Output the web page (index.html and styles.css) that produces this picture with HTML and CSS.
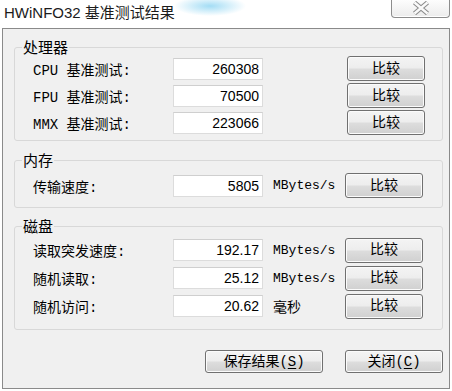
FILE: index.html
```html
<!DOCTYPE html>
<html lang="zh-CN">
<head>
<meta charset="utf-8">
<title>HWiNFO32 基准测试结果</title>
<link rel="stylesheet" href="styles.css">
</head>
<body>
<div class="window">
  <div class="titlebar">
    <span class="title">HWiNFO32 基准测试结果</span>
    <button class="close-btn" aria-label="关闭">
      <svg width="18" height="14" viewBox="0 0 18 14">
        <path d="M2.5 1.5 L15.5 12.5 M15.5 1.5 L2.5 12.5" stroke="#8c8c8c" stroke-width="4.6" fill="none"/>
        <path d="M2.5 1.5 L15.5 12.5 M15.5 1.5 L2.5 12.5" stroke="#fafafa" stroke-width="2.4" fill="none"/>
      </svg>
    </button>
  </div>
  <div class="dialog">
    <fieldset class="group g-cpu">
      <legend>处理器</legend>
      <div class="row"><span class="label">CPU 基准测试:</span><span class="field">260308</span><span class="unit"></span><button class="btn cmp">比较</button></div>
      <div class="row"><span class="label">FPU 基准测试:</span><span class="field">70500</span><span class="unit"></span><button class="btn cmp">比较</button></div>
      <div class="row"><span class="label">MMX 基准测试:</span><span class="field">223066</span><span class="unit"></span><button class="btn cmp">比较</button></div>
    </fieldset>
    <fieldset class="group g-mem">
      <legend>内存</legend>
      <div class="row"><span class="label">传输速度:</span><span class="field">5805</span><span class="unit">MBytes/s</span><button class="btn cmp">比较</button></div>
    </fieldset>
    <fieldset class="group g-disk">
      <legend>磁盘</legend>
      <div class="row tall"><span class="label">读取突发速度:</span><span class="field">192.17</span><span class="unit">MBytes/s</span><button class="btn cmp">比较</button></div>
      <div class="row tall"><span class="label">随机读取:</span><span class="field">25.12</span><span class="unit">MBytes/s</span><button class="btn cmp">比较</button></div>
      <div class="row tall"><span class="label">随机访问:</span><span class="field">20.62</span><span class="unit unit-cjk">毫秒</span><button class="btn cmp">比较</button></div>
    </fieldset>
    <div class="actions">
      <button class="btn action save">保存结果(<u>S</u>)</button>
      <button class="btn action close">关闭(<u>C</u>)</button>
    </div>
  </div>
</div>
</body>
</html>
```
FILE: styles.css
```css
* { box-sizing: border-box; }
html, body { margin: 0; padding: 0; }
body {
  width: 452px;
  height: 391px;
  overflow: hidden;
  background: #fff;
  font-family: "Liberation Sans", "Noto Sans CJK SC", sans-serif;
  color: #000;
}
.window {
  width: 452px;
  height: 391px;
  background:
    radial-gradient(ellipse 36px 10px at 210px 6px, rgba(140, 212, 242, 0.8), rgba(140, 212, 242, 0)),
    #fff;
}
.titlebar {
  height: 28px;
  display: flex;
  justify-content: space-between;
  align-items: flex-start;
}
.title {
  font-family: "Liberation Sans", "Noto Sans CJK SC", sans-serif;
  font-size: 15px;
  line-height: 20px;
  padding: 3px 0 0 4px;
  color: #1b1b1b;
  white-space: nowrap;
}
.close-btn {
  width: 59px;
  height: 18px;
  margin-right: 2px;
  padding: 0 0 2px;
  border: 1px solid #8d8d8d;
  border-top: none;
  border-radius: 0 0 4px 4px;
  background: linear-gradient(#fdfdfd, #ececec);
  box-shadow: inset 0 -1px 0 #fff;
  display: flex;
  align-items: center;
  justify-content: center;
}
.dialog {
  margin-left: 2px;
  width: 448px;
  height: 361px;
  border: 1px solid #8a8a8a;
  background: #f0f0f0;
  padding: 10px 6px 0 11px;
  display: flex;
  flex-direction: column;
}
.group {
  margin: 0;
  min-width: 0;
  border: 1px solid #d8d8d8;
  border-radius: 3px;
  padding: 0 0 4px 7px;
}
.group legend {
  font-family: "Noto Sans CJK SC", sans-serif;
  font-size: 15px;
  line-height: 16px;
  padding: 0 1px;
}
.g-mem { margin-top: 11px; padding-top: 4px; padding-bottom: 8px; }
.g-disk { margin-top: 10px; padding-top: 2px; padding-bottom: 9px; }
.row {
  margin-left: 11px;
  height: 27px;
  display: grid;
  grid-template-columns: 140px 90px 82px 78px;
  align-items: center;
}
.row.tall { height: 28px; }
.label {
  font-family: "Liberation Mono", "Noto Sans CJK SC", monospace;
  font-size: 14px;
  white-space: nowrap;
}
.field {
  height: 22px;
  background: #fff;
  border: 1px solid #dcdcdc;
  border-top-color: #cfcfcf;
  text-align: right;
  padding-right: 3px;
  font-family: "Liberation Sans", sans-serif;
  font-size: 14px;
  line-height: 20px;
}
.unit {
  padding-left: 10px;
  font-family: "Liberation Mono", "Noto Sans CJK SC", monospace;
  font-size: 13px;
  white-space: nowrap;
}
.unit-cjk { font-size: 14px; }
.btn {
  font-family: "Liberation Mono", "Noto Sans CJK SC", monospace;
  font-size: 14px;
  color: #000;
  border: 1px solid #707070;
  border-radius: 3px;
  background: linear-gradient(#f4f4f4 0%, #ededed 48%, #dddddd 52%, #d0d0d0 100%);
  box-shadow: inset 0 0 0 1px #fbfbfb;
  padding: 0;
  line-height: 20px;
}
.cmp { height: 25px; width: 78px; }
.g-cpu .cmp { margin-left: 2px; }
.actions {
  margin-top: 20px;
  display: flex;
  justify-content: flex-end;
  gap: 22px;
}
.action { height: 23px; }
.save { width: 118px; }
.close { width: 98px; }
.action u { text-underline-offset: 2px; }
```
